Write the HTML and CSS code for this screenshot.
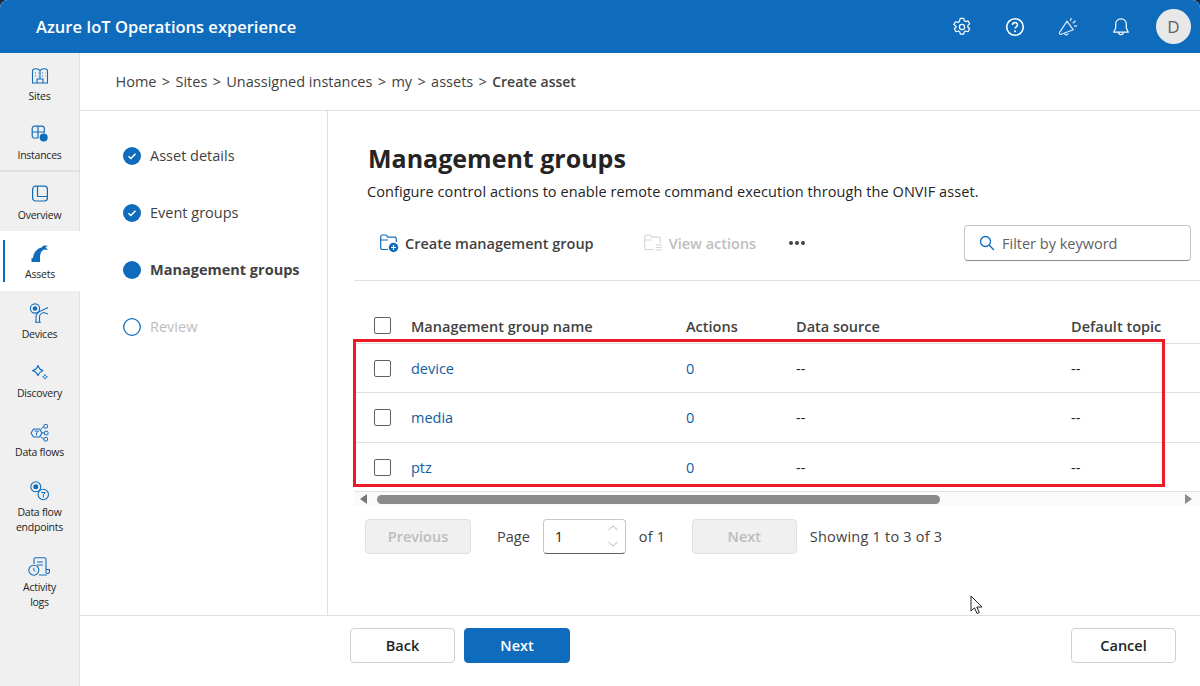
FILE: index.html
```html
<!DOCTYPE html>
<html lang="en">
<head>
<meta charset="utf-8">
<title>Azure IoT Operations experience</title>
<link rel="stylesheet" href="styles.css">
</head>
<body>
<div class="app">
  <header class="topbar">
    <div class="brand">Azure IoT Operations experience</div>
    <div class="top-icons">
      <svg class="ti" viewBox="0 0 20 20"><path d="M8.300 1.400h3.400l.5 2.300 1.500.9 2.300-.7 1.700 2.900-1.800 1.600v1.800l1.800 1.600-1.700 2.900-2.300-.7-1.500.9-.5 2.300H8.300l-.5-2.300-1.500-.9-2.300.7-1.700-2.900 1.800-1.600V9.200L1.800 7.600l1.700-2.900 2.300.7 1.500-.9z" fill="none" stroke="#fff" stroke-width="1.200" stroke-linejoin="round"/><circle cx="10" cy="10" r="2.600" fill="none" stroke="#fff" stroke-width="1.200"/></svg>
      <svg class="ti" viewBox="0 0 20 20"><circle cx="10" cy="10" r="8.300" fill="none" stroke="#fff" stroke-width="1.600"/><path d="M7.500 8c0-1.500 1.100-2.400 2.500-2.400s2.500.9 2.500 2.300c0 1.900-2.500 1.900-2.500 3.700" fill="none" stroke="#fff" stroke-width="1.500"/><circle cx="10" cy="14.200" r="1" fill="#fff"/></svg>
      <svg class="ti" viewBox="0 0 20 20"><path d="M9 4.200 15.300 12.800 3.300 17.200a1.300 1.300 0 0 1-1.700-1.900z" fill="none" stroke="#dceafa" stroke-width="1.200" stroke-linejoin="round"/><path d="M6.300 16.200c.4 2 3.200 2.400 4 .2" fill="none" stroke="#dceafa" stroke-width="1.200"/><path d="M12.300 4 13.300 1M14.800 6.300 17.500 3.700M16 9.200 19 8.800" fill="none" stroke="#dceafa" stroke-width="1.200"/></svg>
      <svg class="ti" viewBox="0 0 20 20"><path d="M10 1.800c-3.200 0-5.300 2.400-5.300 5.400v3.800L2.700 15.200h14.600L15.300 11V7.200c0-3-2.100-5.400-5.300-5.400z" fill="none" stroke="#fff" stroke-width="1.200" stroke-linejoin="round"/><path d="M7.700 15.500c0 2.900 4.600 2.900 4.600 0" fill="none" stroke="#fff" stroke-width="1.200"/></svg>
      <div class="avatar">D</div>
    </div>
  </header>
  <div class="body">
    <nav class="sidenav">
      <div class="nav-group first">
        <a class="nav-item">
          <svg class="ni" viewBox="0 0 20 20"><path d="M2.500 17V5c0-3 5.500-3 7.500-.5C12 2 17.500 2 17.500 5v12z" fill="none" stroke="#0f6cbd" stroke-width="1.100"/><path d="M10 4.500V13M7 17v-4h6v4M5 7h1M5 10h1M8 7h.5M8 10h.5M12 7h1M12 10h1M15 7h.5M15 10h.5" fill="none" stroke="#0f6cbd" stroke-width="1.100"/></svg>
          <span>Sites</span></a>
        <a class="nav-item">
          <svg class="ni" viewBox="0 0 20 20"><path d="M8.500 13H4.500A2.300 2.300 0 0 1 2.200 10.700V3.500A2.300 2.300 0 0 1 4.500 1.200H12A2.300 2.300 0 0 1 14.300 3.500V8M2.200 7H14.300M8 1.200V13" fill="none" stroke="#0f6cbd" stroke-width="1.200"/><circle cx="13.700" cy="12.500" r="4" fill="#0f6cbd"/></svg>
          <span>Instances</span></a>
      </div>
      <div class="nav-group">
        <a class="nav-item">
          <svg class="ni" viewBox="0 0 20 20"><rect x="2.600" y="1.200" width="14.800" height="14.800" rx="3" fill="none" stroke="#0f6cbd" stroke-width="1.200"/><path d="M7.500 1.500v10H17" fill="none" stroke="#0f6cbd" stroke-width="1.200"/></svg>
          <span>Overview</span></a>
        <a class="nav-item active">
          <svg class="ni" viewBox="0 0 20 20"><path d="M1.500 18V14H3C3.500 8.500 7 4.500 11.500 3.500L13.500 1.500L18 1.800L15.500 3.300L18 6L14.500 5.500C11.500 6.300 10 9 10 14V18z" fill="#0f6cbd"/></svg>
          <span>Assets</span></a>
        <a class="nav-item">
          <svg class="ni" viewBox="0 0 20 20"><circle cx="5" cy="4.500" r="4.600" fill="none" stroke="#0f6cbd" stroke-width="1.100"/><circle cx="5" cy="4.500" r="2.300" fill="#0f6cbd"/><path d="M6 18v-5c0-3 3-6 6-6.500l6-3M9.500 18v-5c0-2 2-4 4-4.500L18 10M5 18.300h6" fill="none" stroke="#0f6cbd" stroke-width="1.100"/></svg>
          <span>Devices</span></a>
        <a class="nav-item">
          <svg class="ni" viewBox="0 0 20 20"><path d="M8 2.500c1 3 2.500 4.500 5 5-2.500 1-4 2.500-5 5-1-2.500-2.500-4-5.500-5 3-.5 4.500-2 5.500-5z" fill="none" stroke="#0f6cbd" stroke-width="1.100" stroke-linejoin="round"/><path d="M15 11.500c.4 1.300 1 1.900 2.300 2.300-1.300.4-1.900 1-2.300 2.300-.4-1.300-1-1.900-2.300-2.300 1.300-.4 1.900-1 2.300-2.300z" fill="none" stroke="#0f6cbd" stroke-width="1"/></svg>
          <span>Discovery</span></a>
        <a class="nav-item">
          <svg class="ni" viewBox="0 0 20 20"><path d="M1 11 3.500 7h6L12 11 9.500 15h-6z" fill="none" stroke="#0f6cbd" stroke-width="1.100" stroke-linejoin="round"/><path d="M4.500 9h4l-2 2v2.500" fill="none" stroke="#0f6cbd" stroke-width="1"/><path d="M12 11h2.500M10.500 7.500 14 4.500M10.500 14.500 14 17.500" fill="none" stroke="#0f6cbd" stroke-width="1"/><rect x="14" y="2.500" width="3.500" height="3.500" rx=".8" fill="none" stroke="#0f6cbd"/><rect x="14.500" y="9.300" width="3.500" height="3.500" rx=".8" fill="none" stroke="#0f6cbd"/><rect x="14" y="15.500" width="3.500" height="3.500" rx=".8" fill="none" stroke="#0f6cbd"/></svg>
          <span>Data flows</span></a>
        <a class="nav-item tall">
          <svg class="ni" viewBox="0 0 20 20"><circle cx="5.800" cy="4.800" r="5" fill="none" stroke="#0f6cbd" stroke-width="1.100"/><circle cx="5.800" cy="4.800" r="2.500" fill="#0f6cbd"/><circle cx="13.300" cy="12.500" r="5.200" fill="#f0f0f0" stroke="#0f6cbd" stroke-width="1.100"/><path d="M11.300 10.500h4l-2 2.200v2.800" fill="none" stroke="#0f6cbd"/></svg>
          <span>Data flow<br>endpoints</span></a>
        <a class="nav-item tall">
          <svg class="ni" viewBox="0 0 20 20"><path d="M4 7V2.300A1.500 1.500 0 0 1 5.500 .8H14.500A1.500 1.500 0 0 1 16 2.300V15.500a2 2 0 0 0 3.400 0V12.500H16M7 5H13M7 8H13M9 18H17" fill="none" stroke="#0f6cbd" stroke-width="1.100"/><circle cx="3.800" cy="13.200" r="5" fill="#f0f0f0" stroke="#0f6cbd" stroke-width="1.100"/><path d="M3.800 10.700v2.700l1.700 1" fill="none" stroke="#0f6cbd"/></svg>
          <span>Activity<br>logs</span></a>
      </div>
    </nav>
    <main class="main">
      <div class="crumbs">
        <span>Home</span><i>&gt;</i><span>Sites</span><i>&gt;</i><span>Unassigned instances</span><i>&gt;</i><span>my</span><i>&gt;</i><span>assets</span><i>&gt;</i><b>Create asset</b>
      </div>
      <div class="wizard">
        <aside class="steps">
          <div class="step"><svg class="si" viewBox="0 0 18 18"><circle cx="9" cy="9" r="9" fill="#0f6cbd"/><path d="M5.500 9.300 7.900 11.500 12.500 6.800" fill="none" stroke="#fff" stroke-width="1.500"/></svg><span>Asset details</span></div>
          <div class="step"><svg class="si" viewBox="0 0 18 18"><circle cx="9" cy="9" r="9" fill="#0f6cbd"/><path d="M5.500 9.300 7.900 11.500 12.500 6.800" fill="none" stroke="#fff" stroke-width="1.500"/></svg><span>Event groups</span></div>
          <div class="step current"><svg class="si" viewBox="0 0 18 18"><circle cx="9" cy="9" r="9" fill="#0f6cbd"/></svg><span>Management groups</span></div>
          <div class="step todo"><svg class="si" viewBox="0 0 18 18"><circle cx="9" cy="9" r="8.300" fill="none" stroke="#0f6cbd" stroke-width="1.300"/></svg><span>Review</span></div>
        </aside>
        <section class="panel">
          <h1>Management groups</h1>
          <p class="desc">Configure control actions to enable remote command execution through the ONVIF asset.</p>
          <div class="toolbar">
            <div class="tool">
              <svg class="tool-ico" viewBox="0 0 20 20"><path d="M9 16.500H3.500A1.800 1.800 0 0 1 1.700 14.700V3.800A1.800 1.800 0 0 1 3.500 2H7l2 2.200h6.500a1.800 1.800 0 0 1 1.800 1.800V9M1.700 7H9" fill="none" stroke="#0f6cbd" stroke-width="1.200"/><circle cx="14.500" cy="14.500" r="4.700" fill="#0f6cbd"/><path d="M14.500 12v5M12 14.500h5" stroke="#fff" stroke-width="1.200"/></svg>
              <span>Create management group</span>
            </div>
            <div class="tool disabled">
              <svg class="tool-ico" viewBox="0 0 20 20"><path d="M11 16.500H3.500A1.800 1.800 0 0 1 1.700 14.700V3.800A1.800 1.800 0 0 1 3.500 2H7l2 2.200h6.500a1.800 1.800 0 0 1 1.800 1.800V10M1.700 7H9M13 12h6M13 14.500h6M13 17h6" fill="none" stroke="#d6d6d6" stroke-width="1.200"/></svg>
              <span>View actions</span>
            </div>
            <div class="more"><b></b><b></b><b></b></div>
            <div class="filter">
              <svg class="filter-ico" viewBox="0 0 16 16"><circle cx="6.500" cy="6.500" r="5" fill="none" stroke="#0f6cbd" stroke-width="1.300"/><path d="M10.200 10.200 15 15" stroke="#0f6cbd" stroke-width="1.300"/></svg>
              <span>Filter by keyword</span>
            </div>
          </div>
          <div class="table-wrap">
            <div class="row head">
              <div class="c0"><span class="cb"></span></div><div class="c1">Management group name</div><div class="c2">Actions</div><div class="c3">Data source</div><div class="c4">Default topic</div>
            </div>
            <div class="row">
              <div class="c0"><span class="cb"></span></div><div class="c1 lnk">device</div><div class="c2 lnk">0</div><div class="c3">--</div><div class="c4">--</div>
            </div>
            <div class="row">
              <div class="c0"><span class="cb"></span></div><div class="c1 lnk">media</div><div class="c2 lnk">0</div><div class="c3">--</div><div class="c4">--</div>
            </div>
            <div class="row">
              <div class="c0"><span class="cb"></span></div><div class="c1 lnk">ptz</div><div class="c2 lnk">0</div><div class="c3">--</div><div class="c4">--</div>
            </div>
          </div>
          <div class="hscroll"><span class="arrow left"></span><div class="track"><div class="thumb"></div></div><span class="arrow right"></span></div>
          <div class="pager">
            <button class="pg-btn prev" type="button">Previous</button>
            <span class="pg-label">Page</span>
            <div class="spin"><span>1</span>
              <svg class="spin-ico" viewBox="0 0 12 24"><path d="M1.500 6 6 2l4.500 4M1.500 18 6 22l4.500-4" fill="none" stroke="#b5b5b5"/></svg>
            </div>
            <span class="pg-of">of 1</span>
            <button class="pg-btn nxt" type="button">Next</button>
            <span class="pg-show">Showing 1 to 3 of 3</span>
          </div>
        </section>
      </div>
      <footer class="foot">
        <button class="btn back" type="button">Back</button>
        <button class="btn primary" type="button">Next</button>
        <button class="btn cancel" type="button">Cancel</button>
      </footer>
    </main>
  </div>
  <div class="redbox"></div>
  <svg class="cursor" viewBox="0 0 14 20"><path d="M1 1v15l3.500-3.200 2.500 5.700 2.300-1-2.500-5.500H12z" fill="#fff" stroke="#222" stroke-width="1"/></svg>
</div>
</body>
</html>
```
FILE: styles.css
```css
* { box-sizing: border-box; }
html, body { margin: 0; padding: 0; }
body { font-family: "Open Sans", "Noto Sans", sans-serif; color: #242424; background: #1c2b3a; overflow: hidden; }
.app { position: relative; width: 1200px; height: 686px; display: flex; flex-direction: column; overflow: hidden; background: #fff; border-radius: 8px 8px 0 0; }

.topbar { height: 53px; flex: none; background: #0f6cbd; color: #fff; display: flex; align-items: center; justify-content: space-between; padding: 0 9px 0 36px; }
.brand { font-size: 16.500px; font-weight: 600; }
.top-icons { display: flex; align-items: center; gap: 33px; }
.ti { width: 20px; height: 20px; display: block; }
.avatar { width: 35px; height: 35px; margin-left: -8px; border-radius: 50%; background: #e8e8e8; color: #616161; font-size: 17px; display: flex; align-items: center; justify-content: center; }

.body { flex: 1; display: flex; min-height: 0; }
.sidenav { width: 80px; flex: none; background: #f0f0f0; border-right: 1px solid #e0e0e0; display: flex; flex-direction: column; }
.nav-group.first { border-bottom: 2px solid #e0e0e0; height: 119px; }
.nav-item { height: 59.360px; display: flex; flex-direction: column; align-items: center; padding-top: 13px; font-size: 10.500px; line-height: 15px; text-align: center; color: #242424; position: relative; letter-spacing: -.25px; }
.nav-group.first .nav-item { height: 59px; }
.nav-item.tall { height: 75px; }
.nav-item.active { background: #fff; margin-right: -1px; }
.nav-item.active::before { content: ""; position: absolute; left: 3px; top: 9px; width: 2px; height: 42px; background: #0f6cbd; }
.ni { width: 20px; height: 20px; display: block; margin-bottom: 3px; flex: none; overflow: visible; }

.main { flex: 1; min-width: 0; display: flex; flex-direction: column; }
.crumbs { height: 58px; flex: none; border-bottom: 1px solid #e0e0e0; display: flex; align-items: center; padding-left: 35.500px; font-size: 14.500px; color: #424242; }
.crumbs i { font-style: normal; margin: 0 5.350px; }
.crumbs b { font-weight: 600; font-size: 14px; }

.wizard { flex: 1; min-height: 0; display: flex; }
.steps { width: 248px; flex: none; border-right: 1px solid #e0e0e0; padding: 16px 0 0 43px; }
.step { height: 57px; display: flex; align-items: center; gap: 9px; font-size: 14.500px; color: #424242; }
.step.current { font-weight: 700; }
.step.todo { color: #bdbdbd; }
.si { width: 18px; height: 18px; flex: none; }

.panel { flex: 1; min-width: 0; padding: 0 0 0 26px; overflow: hidden; }
.panel h1 { margin: 30.500px 0 0 14px; font-size: 25px; line-height: 32px; font-weight: 700; color: #242424; }
.desc { margin: 8.500px 0 0 13px; font-size: 14.500px; line-height: 20px; letter-spacing: .07px; color: #242424; }
.toolbar { height: 79px; border-bottom: 1px solid #e0e0e0; display: flex; align-items: center; padding: 4px 9px 0 25px; font-size: 14.500px; font-weight: 600; color: #424242; }
.tool { display: flex; align-items: center; gap: 6px; }
.tool-ico { width: 20px; height: 20px; }
.tool.disabled { margin-left: 49px; color: #bdbdbd; }
.more { display: flex; gap: 2px; margin-left: 33px; }
.more b { width: 4px; height: 4px; border-radius: 50%; background: #424242; }
.filter { margin-left: auto; width: 227px; height: 36px; border: 1px solid #c7c7c7; border-bottom-color: #8a8a8a; border-radius: 4px; display: flex; align-items: center; gap: 7px; padding-left: 14px; font-weight: 400; color: #616161; }
.filter-ico { width: 16px; height: 16px; }

.table-wrap { margin-top: 29px; width: 860px; font-size: 14.500px; }
.row { height: 49.420px; display: flex; align-items: center; border-bottom: 1px solid #e0e0e0; }
.row.head { height: 34px; font-weight: 600; color: #424242; align-items: flex-start; }
.c0 { width: 57px; flex: none; padding-left: 20px; display: flex; }
.head .c1, .head .c2, .head .c3, .head .c4 { line-height: 20px; padding-top: 7px; }
.head .c0 { padding-top: 7px; }
.c1 { width: 275px; flex: none; }
.c2 { width: 110px; flex: none; }
.c3 { width: 275px; flex: none; }
.c4 { flex: 1; }
.cb { width: 17px; height: 17px; border: 1px solid #616161; border-radius: 2px; display: block; background: #fff; }
.lnk { color: #115ea3; }

.hscroll { height: 14px; background: #fafafa; display: flex; align-items: center; }
.arrow { width: 0; height: 0; border-top: 5px solid transparent; border-bottom: 5px solid transparent; flex: none; }
.arrow.left { border-right: 7px solid #777; margin-left: 6px; }
.arrow.right { border-left: 7px solid #8a8a8a; margin-right: 8px; }
.track { flex: 1; padding: 0 8px 0 10px; }
.thumb { width: 563px; height: 9px; border-radius: 5px; background: #8a8a8a; }

.pager { margin-top: 12px; display: flex; align-items: center; height: 36px; padding-left: 11px; font-size: 14.500px; color: #424242; }
.pg-btn { height: 35px; border: 1px solid #e0e0e0; border-radius: 4px; background: #f0f0f0; color: #bdbdbd; font: 600 14.500px "Open Sans", sans-serif; padding: 0; }
.prev { width: 106px; }
.nxt { width: 105px; margin-left: 26.500px; }
.pg-label { margin-left: 26px; }
.spin { width: 83px; height: 35px; margin-left: 13px; border: 1px solid #c7c7c7; border-bottom-color: #616161; border-radius: 4px; display: flex; align-items: center; justify-content: space-between; padding: 0 6px 0 11px; color: #242424; }
.spin-ico { width: 12px; height: 24px; }
.pg-of { margin-left: 13px; letter-spacing: .2px; }
.pg-show { margin-left: 13px; letter-spacing: .22px; }

.foot { height: 71px; flex: none; border-top: 1px solid #e0e0e0; display: flex; align-items: center; padding: 0 24px 11px 270px; }
.btn { height: 35px; border-radius: 4px; font: 600 14.500px "Open Sans", sans-serif; border: 1px solid #d1d1d1; background: #fff; color: #242424; padding: 0; }
.back { width: 105px; }
.primary { width: 106px; margin-left: 9px; background: #0f6cbd; border-color: #0f6cbd; color: #fff; }
.cancel { width: 105px; margin-left: auto; }

.redbox { position: absolute; left: 353px; top: 339px; width: 812px; height: 148px; border: 3px solid #ed1c24; pointer-events: none; }
.cursor { position: absolute; left: 970px; top: 595px; width: 14px; height: 20px; }
```
